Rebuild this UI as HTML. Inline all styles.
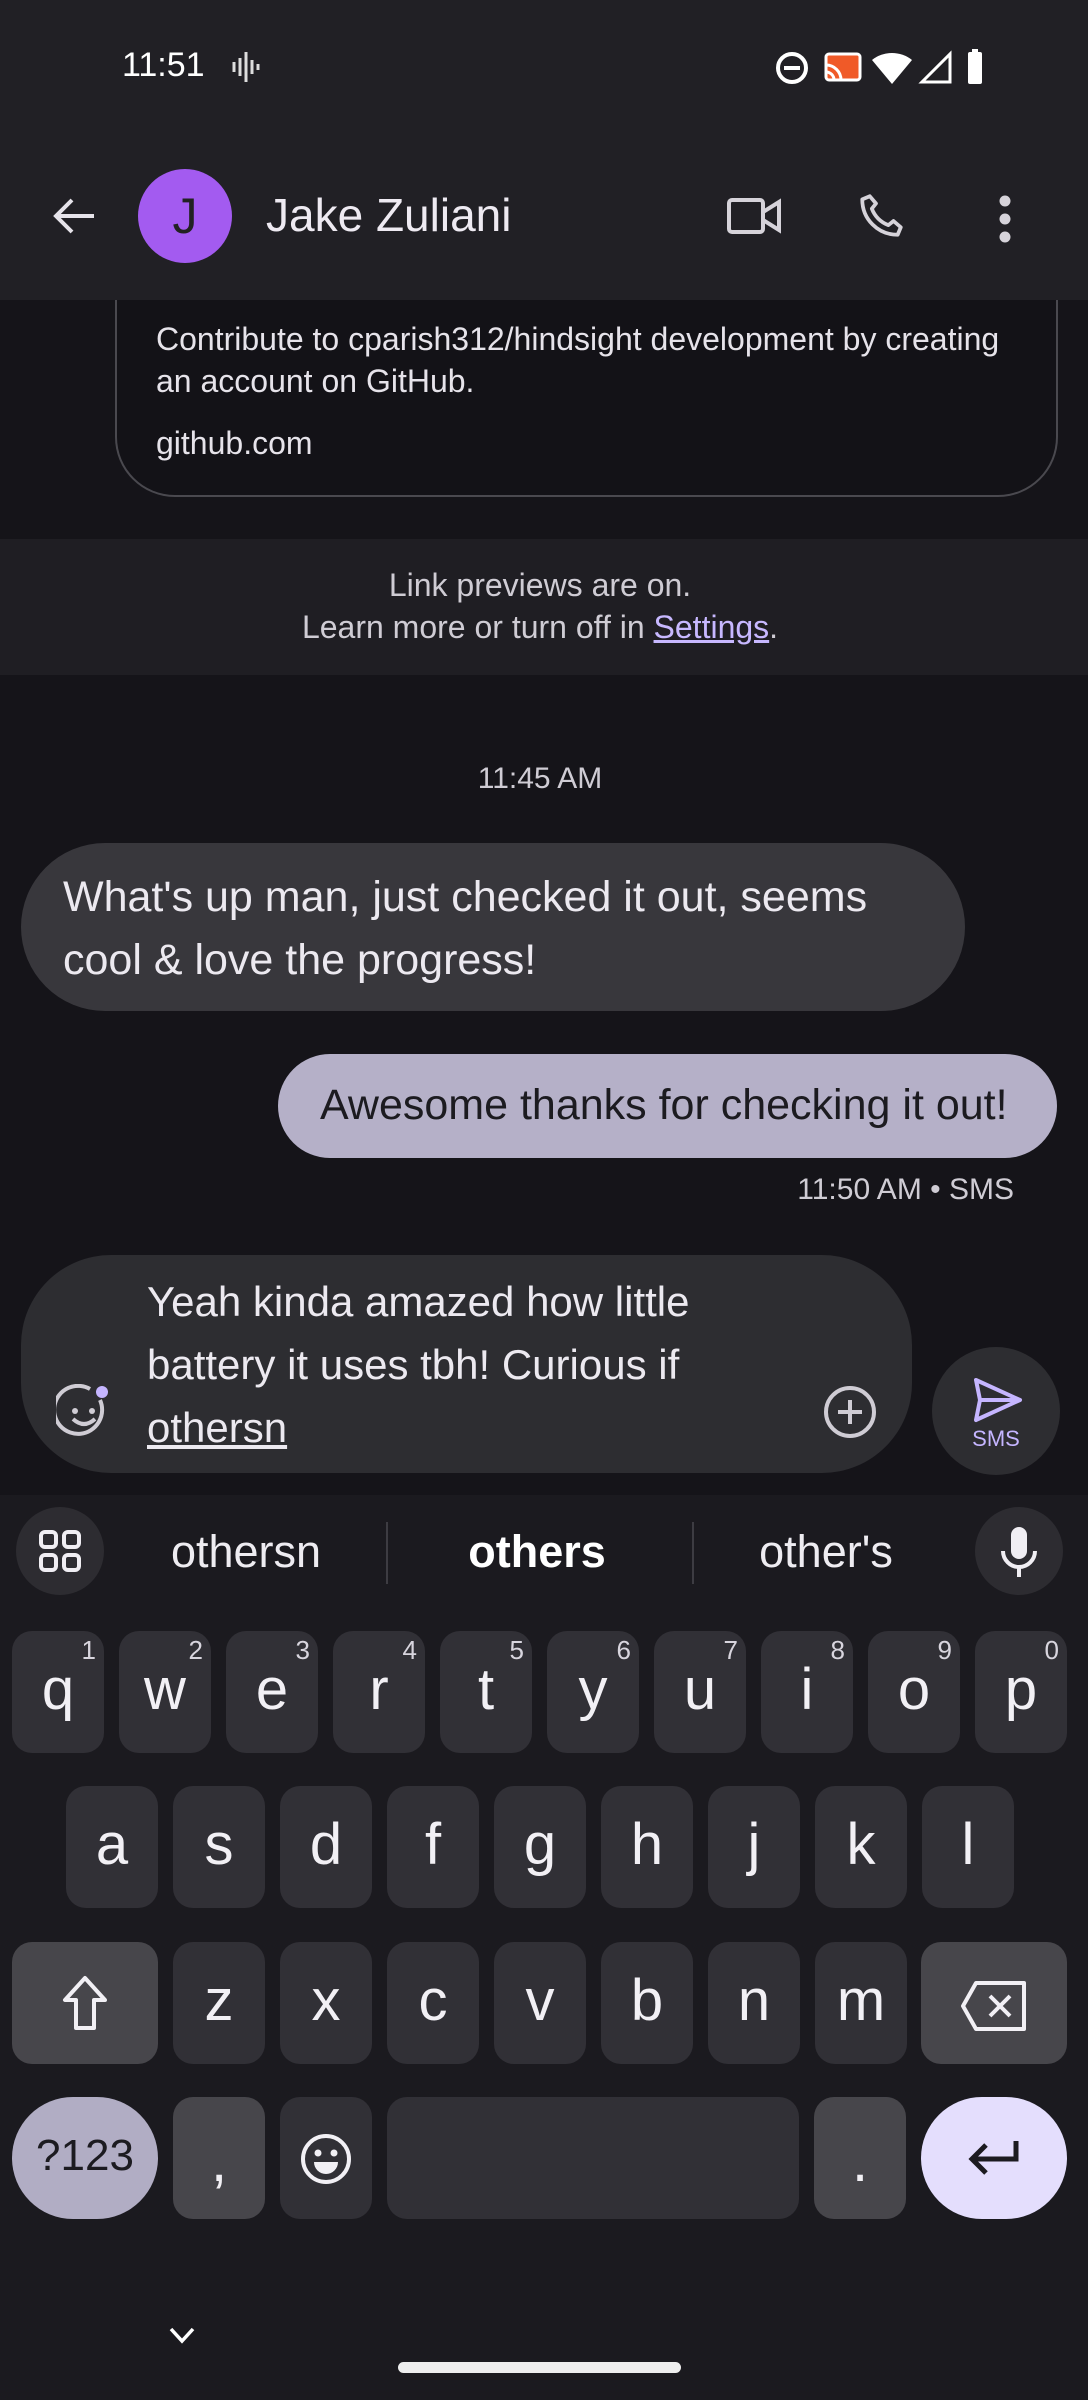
<!DOCTYPE html>
<html><head><meta charset="utf-8"><style>
*{margin:0;padding:0;box-sizing:border-box}
body{width:1088px;height:2400px;background:#151419;font-family:"Liberation Sans",sans-serif;color:#e6e3ea;position:relative;overflow:hidden}
.a{position:absolute}
.k{position:absolute;background:#313036;border-radius:20px;height:122px;width:92px;color:#f2f0f5;font-size:58px;text-align:center;line-height:118px}
.k sup{position:absolute;right:8px;top:6px;font-size:26px;line-height:26px;color:#d8d5de}
.f{background:#47464b}
</style></head><body>
<!-- link card -->
<div class="a" style="left:115px;top:290px;width:943px;height:207px;border:2px solid #4a494f;border-top:none;border-radius:0 0 60px 60px;background:#131217"></div>
<div class="a" style="left:156px;top:318px;font-size:32px;line-height:42px;color:#e6e3ea">Contribute to cparish312/hindsight development by creating<br>an account on GitHub.</div>
<div class="a" style="left:156px;top:425px;font-size:32px;color:#e6e3ea">github.com</div>
<!-- top bar -->
<div class="a" style="left:0;top:0;width:1088px;height:300px;background:#212025"></div>
<div class="a" style="left:122px;top:46px;font-size:34px;color:#fff">11:51</div>
<svg class="a" style="left:230px;top:52px" width="32" height="30" viewBox="0 0 32 30"><g stroke="#ddd" stroke-width="3"><line x1="4" y1="10" x2="4" y2="20"/><line x1="10" y1="6" x2="10" y2="24"/><line x1="16" y1="0" x2="16" y2="30"/><line x1="22" y1="8" x2="22" y2="22"/><line x1="28" y1="12" x2="28" y2="18"/></g></svg>
<svg class="a" style="left:774px;top:48px" width="220" height="40" viewBox="0 0 220 40"><circle cx="18" cy="20" r="14" fill="none" stroke="#fff" stroke-width="4"/><rect x="10" y="18" width="16" height="4" fill="#fff"/><rect x="52" y="6" width="34" height="26" rx="3" fill="#f05a28" stroke="#fff" stroke-width="3"/><path d="M52 24a8 8 0 0 1 8 8M52 17a15 15 0 0 1 15 15" stroke="#fff" stroke-width="3" fill="none"/><path d="M98 12a32 32 0 0 1 40 0L118 36z" fill="#fff"/><path d="M176 6v28h-28z" fill="none" stroke="#fff" stroke-width="3"/><rect x="194" y="4" width="14" height="32" rx="2" fill="#fff"/><rect x="198" y="1" width="6" height="4" fill="#fff"/></svg>
<svg class="a" style="left:52px;top:196px" width="44" height="40" viewBox="0 0 44 40"><path d="M42 20H4M20 4L4 20l16 16" stroke="#e6e3ea" stroke-width="4" fill="none"/></svg>
<div class="a" style="left:138px;top:169px;width:94px;height:94px;border-radius:50%;background:#a35bf0;color:#222;font-size:50px;text-align:center;line-height:94px">J</div>
<div class="a" style="left:266px;top:188px;font-size:46px;color:#eeeaf2">Jake Zuliani</div>
<svg class="a" style="left:726px;top:196px" width="56" height="40" viewBox="0 0 56 40"><rect x="3" y="4" width="34" height="32" rx="3" fill="none" stroke="#d6d3da" stroke-width="4"/><path d="M37 16l16-10v28l-16-10" fill="none" stroke="#d6d3da" stroke-width="4"/></svg>
<svg class="a" style="left:856px;top:190px" width="50" height="52" viewBox="0 0 24 24"><path d="M6.6 2.5l3 3.5-2 2.5a14 14 0 0 0 7.9 7.9l2.5-2 3.5 3-1.5 3.6C10.5 21 3 13.5 3 4z" fill="none" stroke="#d6d3da" stroke-width="1.8" stroke-linejoin="round"/></svg>
<svg class="a" style="left:998px;top:194px" width="14" height="50" viewBox="0 0 14 50"><circle cx="7" cy="7" r="5.5" fill="#d6d3da"/><circle cx="7" cy="25" r="5.5" fill="#d6d3da"/><circle cx="7" cy="43" r="5.5" fill="#d6d3da"/></svg>
<div class="a" style="left:0;top:539px;width:1088px;height:136px;background:#1f1e23"></div>
<div class="a" style="left:0;top:564px;width:1080px;text-align:center;font-size:32px;line-height:42px;color:#cfccd4">Link previews are on.<br>Learn more or turn off in <span style="color:#c7b8ff;text-decoration:underline">Settings</span>.</div>
<div class="a" style="left:0;top:762px;width:1080px;text-align:center;font-size:30px;color:#cfccd4">11:45 AM</div>
<div class="a" style="left:21px;top:843px;width:944px;height:168px;border-radius:84px;background:#38373c"></div>
<div class="a" style="left:63px;top:866px;font-size:43px;line-height:63px;color:#ece9f0">What's up man, just checked it out, seems<br>cool &amp; love the progress!</div>
<div class="a" style="left:278px;top:1054px;width:779px;height:104px;border-radius:52px;background:#b5b0c8"></div>
<div class="a" style="left:320px;top:1081px;font-size:43px;color:#1c1b20">Awesome thanks for checking it out!</div>
<div class="a" style="left:680px;top:1173px;width:334px;text-align:right;font-size:30px;color:#cfccd4">11:50 AM • SMS</div>
<!-- compose -->
<div class="a" style="left:21px;top:1255px;width:891px;height:218px;border-radius:90px;background:#2d2d31"></div>
<div class="a" style="left:147px;top:1270px;font-size:42px;line-height:63px;color:#ece9f0">Yeah kinda amazed how little<br>battery it uses tbh! Curious if<br><span style="text-decoration:underline">othersn</span></div>
<svg class="a" style="left:56px;top:1384px" width="58" height="56" viewBox="0 0 58 56"><path d="M44 16A24 24 0 1 1 34 5" fill="none" stroke="#cfccd4" stroke-width="4"/><circle cx="19" cy="27" r="3" fill="#cfccd4"/><circle cx="36" cy="27" r="3" fill="#cfccd4"/><path d="M17 35q11 10 22 0" fill="none" stroke="#cfccd4" stroke-width="4"/><circle cx="46" cy="8" r="6" fill="#c5b5ff"/></svg>
<svg class="a" style="left:823px;top:1385px" width="54" height="54" viewBox="0 0 54 54"><circle cx="27" cy="27" r="24" fill="none" stroke="#cfccd4" stroke-width="4"/><path d="M27 15v24M15 27h24" stroke="#cfccd4" stroke-width="4"/></svg>
<div class="a" style="left:932px;top:1347px;width:128px;height:128px;border-radius:50%;background:#2d2d31"></div>
<svg class="a" style="left:972px;top:1376px" width="52" height="48" viewBox="0 0 52 48"><path d="M4 4l44 20L4 44l4-20z" fill="none" stroke="#c5b5ff" stroke-width="4" stroke-linejoin="round"/><path d="M8 24h40" stroke="#c5b5ff" stroke-width="4"/></svg>
<div class="a" style="left:960px;top:1426px;width:72px;text-align:center;font-size:22px;color:#c5b5ff">SMS</div>
<!-- keyboard -->
<div class="a" style="left:0;top:1495px;width:1088px;height:905px;background:#1b1a1f"></div>
<div class="a" style="left:16px;top:1507px;width:88px;height:88px;border-radius:50%;background:#2d2c31"></div>
<svg class="a" style="left:38px;top:1529px" width="44" height="44" viewBox="0 0 44 44"><g fill="none" stroke="#f0eef3" stroke-width="4"><rect x="3" y="3" width="15" height="15" rx="4"/><rect x="26" y="3" width="15" height="15" rx="4"/><rect x="3" y="26" width="15" height="15" rx="4"/><rect x="26" y="26" width="15" height="15" rx="4"/></g></svg>
<div class="a" style="left:146px;top:1526px;width:200px;text-align:center;font-size:45px;color:#eeecf1">othersn</div>
<div class="a" style="left:386px;top:1522px;width:2px;height:62px;background:#3d3c42"></div>
<div class="a" style="left:437px;top:1526px;width:200px;text-align:center;font-size:45px;font-weight:bold;color:#fff">others</div>
<div class="a" style="left:692px;top:1522px;width:2px;height:62px;background:#3d3c42"></div>
<div class="a" style="left:726px;top:1526px;width:200px;text-align:center;font-size:45px;color:#eeecf1">other's</div>
<div class="a" style="left:975px;top:1507px;width:88px;height:88px;border-radius:50%;background:#2d2c31"></div>
<svg class="a" style="left:999px;top:1525px" width="40" height="54" viewBox="0 0 40 54"><rect x="12" y="2" width="16" height="32" rx="8" fill="#f0eef3"/><path d="M4 26a16 16 0 0 0 32 0M20 42v10" fill="none" stroke="#f0eef3" stroke-width="4"/></svg>
<!-- row1 -->
<div class="k" style="left:12px;top:1631px">q<sup>1</sup></div>
<div class="k" style="left:119px;top:1631px">w<sup>2</sup></div>
<div class="k" style="left:226px;top:1631px">e<sup>3</sup></div>
<div class="k" style="left:333px;top:1631px">r<sup>4</sup></div>
<div class="k" style="left:440px;top:1631px">t<sup>5</sup></div>
<div class="k" style="left:547px;top:1631px">y<sup>6</sup></div>
<div class="k" style="left:654px;top:1631px">u<sup>7</sup></div>
<div class="k" style="left:761px;top:1631px">i<sup>8</sup></div>
<div class="k" style="left:868px;top:1631px">o<sup>9</sup></div>
<div class="k" style="left:975px;top:1631px">p<sup>0</sup></div>
<!-- row2 -->
<div class="k" style="left:66px;top:1786px">a</div>
<div class="k" style="left:173px;top:1786px">s</div>
<div class="k" style="left:280px;top:1786px">d</div>
<div class="k" style="left:387px;top:1786px">f</div>
<div class="k" style="left:494px;top:1786px">g</div>
<div class="k" style="left:601px;top:1786px">h</div>
<div class="k" style="left:708px;top:1786px">j</div>
<div class="k" style="left:815px;top:1786px">k</div>
<div class="k" style="left:922px;top:1786px">l</div>
<!-- row3 -->
<div class="k f" style="left:12px;top:1942px;width:146px"><svg style="margin-top:33px" width="46" height="56" viewBox="0 0 46 56"><path d="M23 3L3 25h11v28h18V25h11z" fill="none" stroke="#f2f0f5" stroke-width="4" stroke-linejoin="round"/></svg></div>
<div class="k" style="left:173px;top:1942px">z</div>
<div class="k" style="left:280px;top:1942px">x</div>
<div class="k" style="left:387px;top:1942px">c</div>
<div class="k" style="left:494px;top:1942px">v</div>
<div class="k" style="left:601px;top:1942px">b</div>
<div class="k" style="left:708px;top:1942px">n</div>
<div class="k" style="left:815px;top:1942px">m</div>
<div class="k f" style="left:921px;top:1942px;width:146px"><svg style="margin-top:38px" width="68" height="52" viewBox="0 0 68 52"><path d="M16 3h48v46H16L3 26z" fill="none" stroke="#f2f0f5" stroke-width="4" stroke-linejoin="round"/><path d="M30 16l20 20M50 16L30 36" stroke="#f2f0f5" stroke-width="4"/></svg></div>
<!-- row4 -->
<div class="k" style="left:12px;top:2097px;width:146px;border-radius:61px;background:#b1adc4;color:#1c1b20;font-size:44px">?123</div>
<div class="k f" style="left:173px;top:2097px;line-height:130px">,</div>
<div class="k" style="left:280px;top:2097px"><svg style="margin-top:36px" width="52" height="52" viewBox="0 0 52 52"><circle cx="26" cy="26" r="23" fill="none" stroke="#f2f0f5" stroke-width="4"/><circle cx="18" cy="20" r="3.5" fill="#f2f0f5"/><circle cx="34" cy="20" r="3.5" fill="#f2f0f5"/><path d="M14 29h24a12 12 0 0 1-24 0z" fill="#f2f0f5"/></svg></div>
<div class="k" style="left:387px;top:2097px;width:412px"></div>
<div class="k f" style="left:814px;top:2097px;line-height:130px">.</div>
<div class="k" style="left:921px;top:2097px;width:146px;border-radius:61px;background:#e4defd"><svg style="margin-top:42px" width="52" height="40" viewBox="0 0 52 40"><path d="M48 2v18H6M18 6L4 20l14 14" fill="none" stroke="#1c1b20" stroke-width="5"/></svg></div>
<!-- nav -->
<svg class="a" style="left:168px;top:2326px" width="28" height="18" viewBox="0 0 28 18"><path d="M3 3l11 12L25 3" fill="none" stroke="#fff" stroke-width="3.5"/></svg>
<div class="a" style="left:398px;top:2362px;width:283px;height:11px;border-radius:6px;background:#eeeeee"></div>
</body></html>
